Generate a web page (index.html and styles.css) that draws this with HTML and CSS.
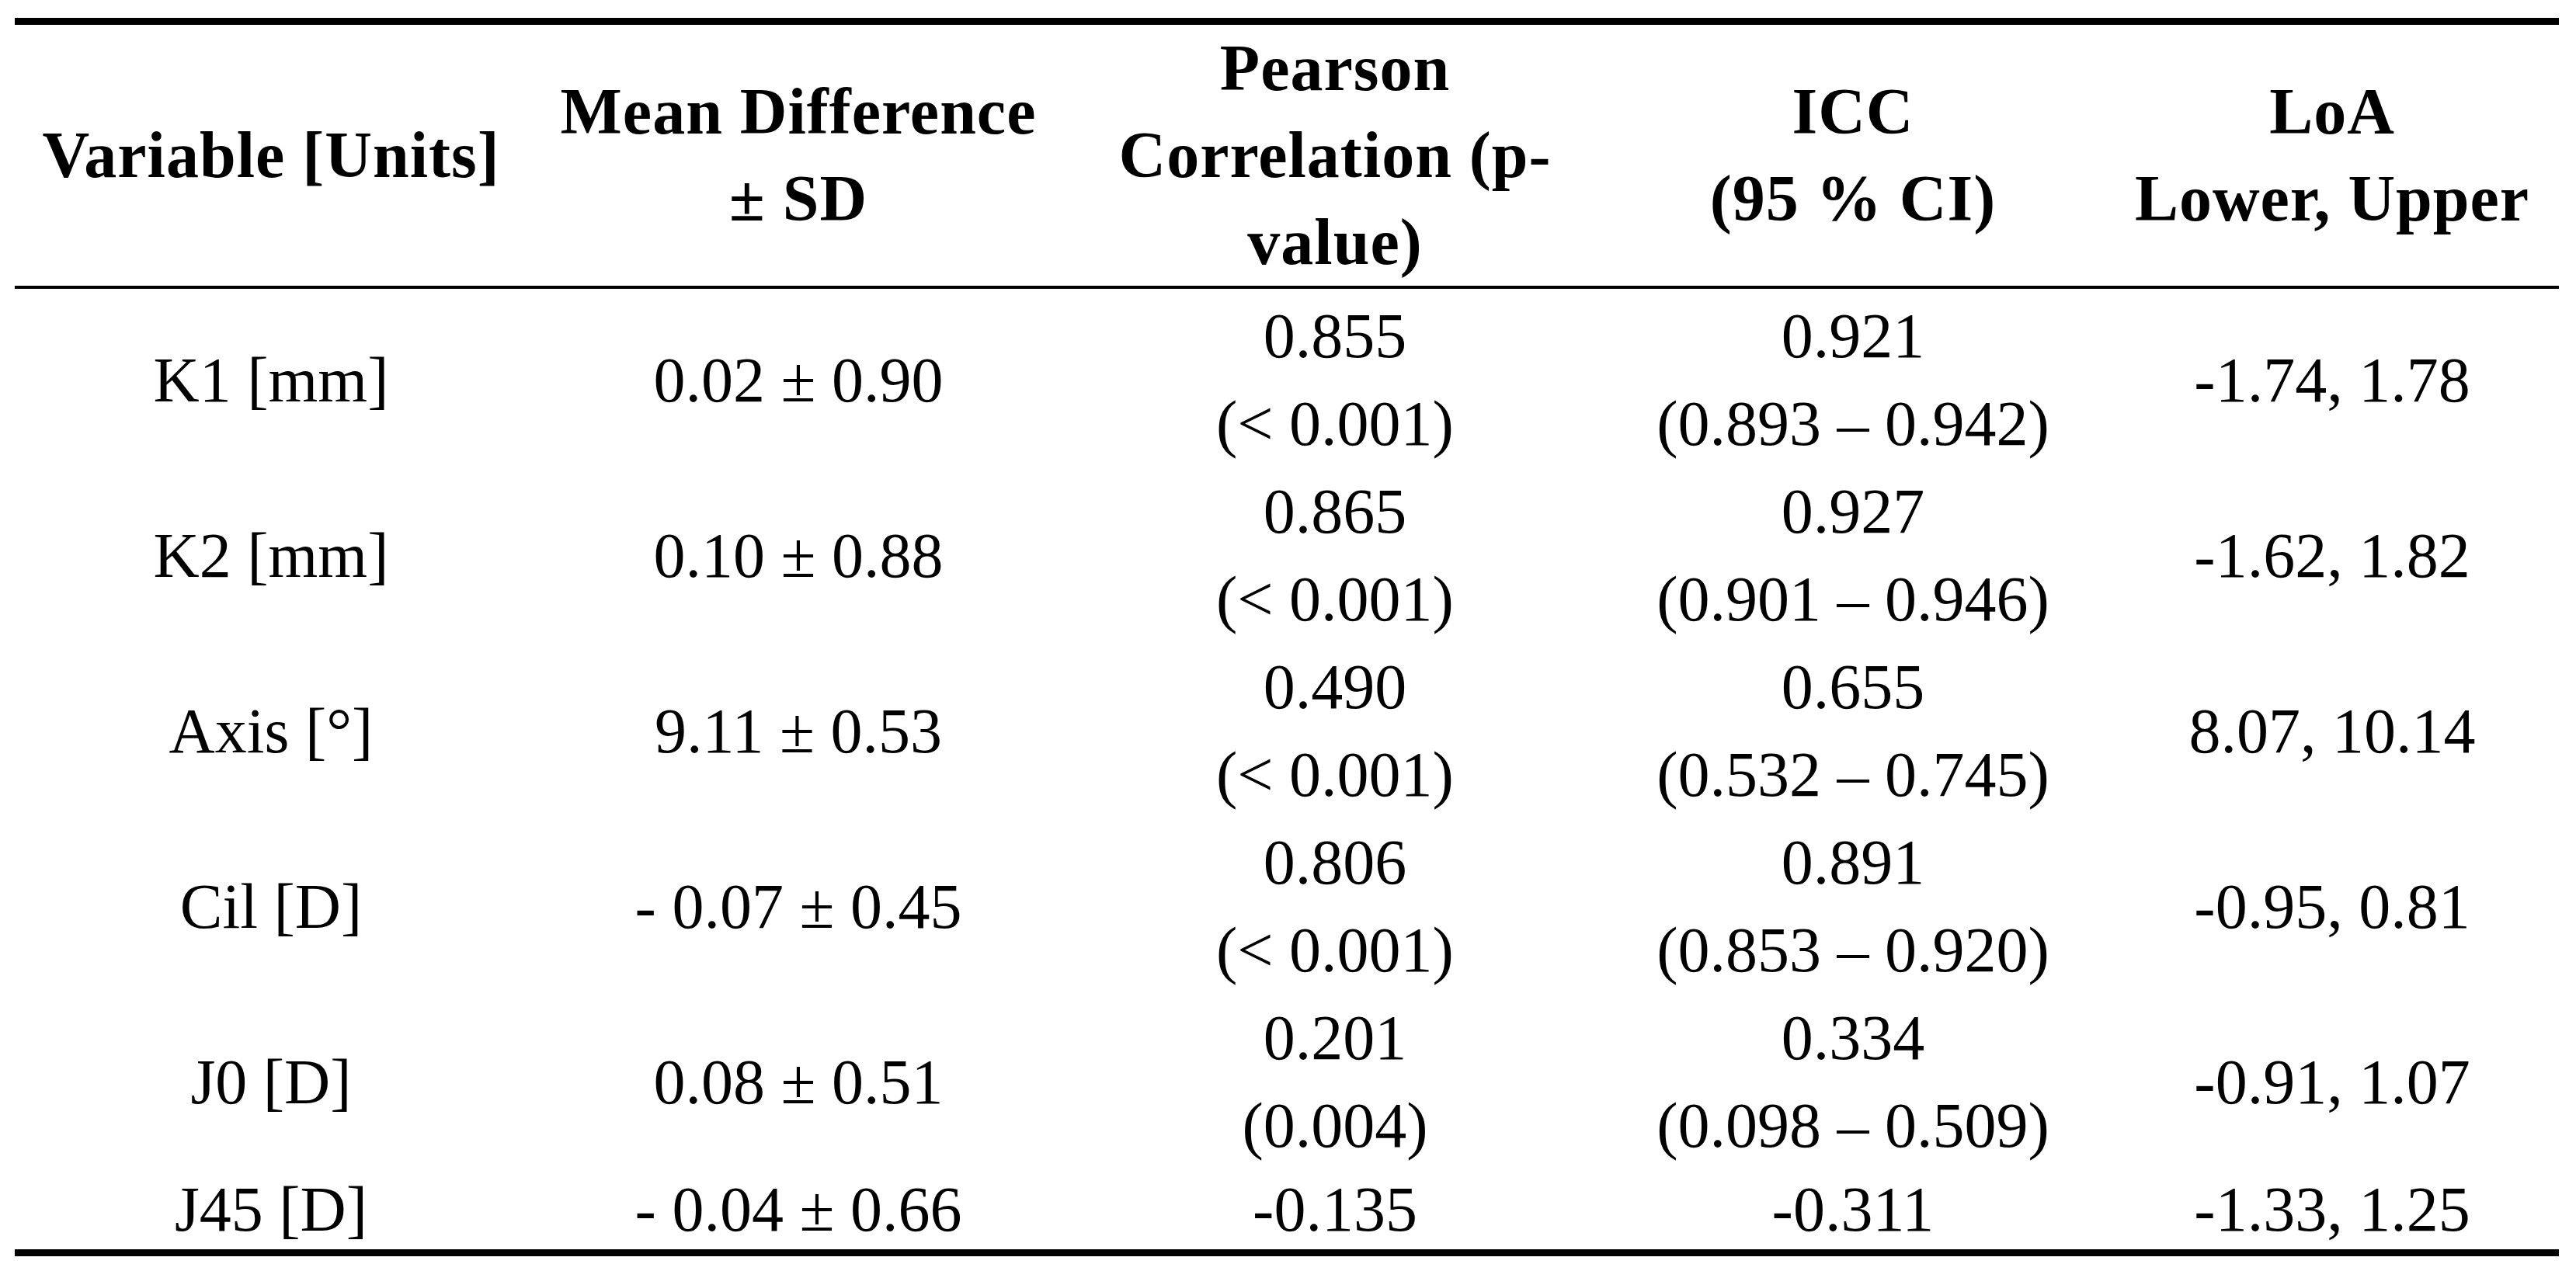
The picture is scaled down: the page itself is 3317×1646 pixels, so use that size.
FILE: index.html
```html
<!DOCTYPE html>
<html>
<head>
<meta charset="utf-8">
<link rel="stylesheet" href="styles.css">
</head>
<body>
<table class="stats">
  <colgroup>
    <col class="c1"><col class="c2"><col class="c3"><col class="c4"><col class="c5">
  </colgroup>
  <thead>
    <tr>
      <th>Variable [Units]</th>
      <th>Mean Difference<br>± SD</th>
      <th>Pearson<br>Correlation (p-<br>value)</th>
      <th>ICC<br>(95 % CI)</th>
      <th>LoA<br>Lower, Upper</th>
    </tr>
  </thead>
  <tbody>
    <tr class="first">
      <td>K1 [mm]</td>
      <td>0.02 ± 0.90</td>
      <td>0.855<br>(&lt; 0.001)</td>
      <td>0.921<br>(0.893 – 0.942)</td>
      <td>-1.74, 1.78</td>
    </tr>
    <tr>
      <td>K2 [mm]</td>
      <td>0.10 ± 0.88</td>
      <td>0.865<br>(&lt; 0.001)</td>
      <td>0.927<br>(0.901 – 0.946)</td>
      <td>-1.62, 1.82</td>
    </tr>
    <tr>
      <td>Axis [°]</td>
      <td>9.11 ± 0.53</td>
      <td>0.490<br>(&lt; 0.001)</td>
      <td>0.655<br>(0.532 – 0.745)</td>
      <td>8.07, 10.14</td>
    </tr>
    <tr>
      <td>Cil [D]</td>
      <td>- 0.07 ± 0.45</td>
      <td>0.806<br>(&lt; 0.001)</td>
      <td>0.891<br>(0.853 – 0.920)</td>
      <td>-0.95, 0.81</td>
    </tr>
    <tr>
      <td>J0 [D]</td>
      <td>0.08 ± 0.51</td>
      <td>0.201<br>(0.004)</td>
      <td>0.334<br>(0.098 – 0.509)</td>
      <td>-0.91, 1.07</td>
    </tr>
    <tr class="last">
      <td>J45 [D]</td>
      <td>- 0.04 ± 0.66</td>
      <td>-0.135</td>
      <td>-0.311</td>
      <td>-1.33, 1.25</td>
    </tr>
  </tbody>
</table>
</body>
</html>
```
FILE: styles.css
```css
html, body {
  margin: 0;
  padding: 0;
  background: #ffffff;
}

.stats {
  margin: 23px 0 0 19px;
  width: 3276px;
  table-layout: fixed;
  border-collapse: separate;
  border-spacing: 0;
  font-family: "Liberation Serif", "Times New Roman", serif;
  font-size: 82px;
  color: #000000;
}

.c1 { width: 660px; }
.c2 { width: 698px; }
.c3 { width: 684px; }
.c4 { width: 650px; }
.c5 { width: 584px; }

.stats th {
  font-weight: bold;
  font-size: 84px;
  letter-spacing: 1px;
  line-height: 112px;
  padding: 0;
  text-align: center;
  vertical-align: middle;
  border-top: 9px solid #000000;
  border-bottom: 4px solid #000000;
}

.stats td {
  font-weight: normal;
  line-height: 113px;
  padding: 0;
  text-align: center;
  vertical-align: middle;
}

.stats tr.first td {
  padding-top: 4px;
}

.stats tr.last td {
  line-height: 103px;
  border-bottom: 9px solid #000000;
}
```
